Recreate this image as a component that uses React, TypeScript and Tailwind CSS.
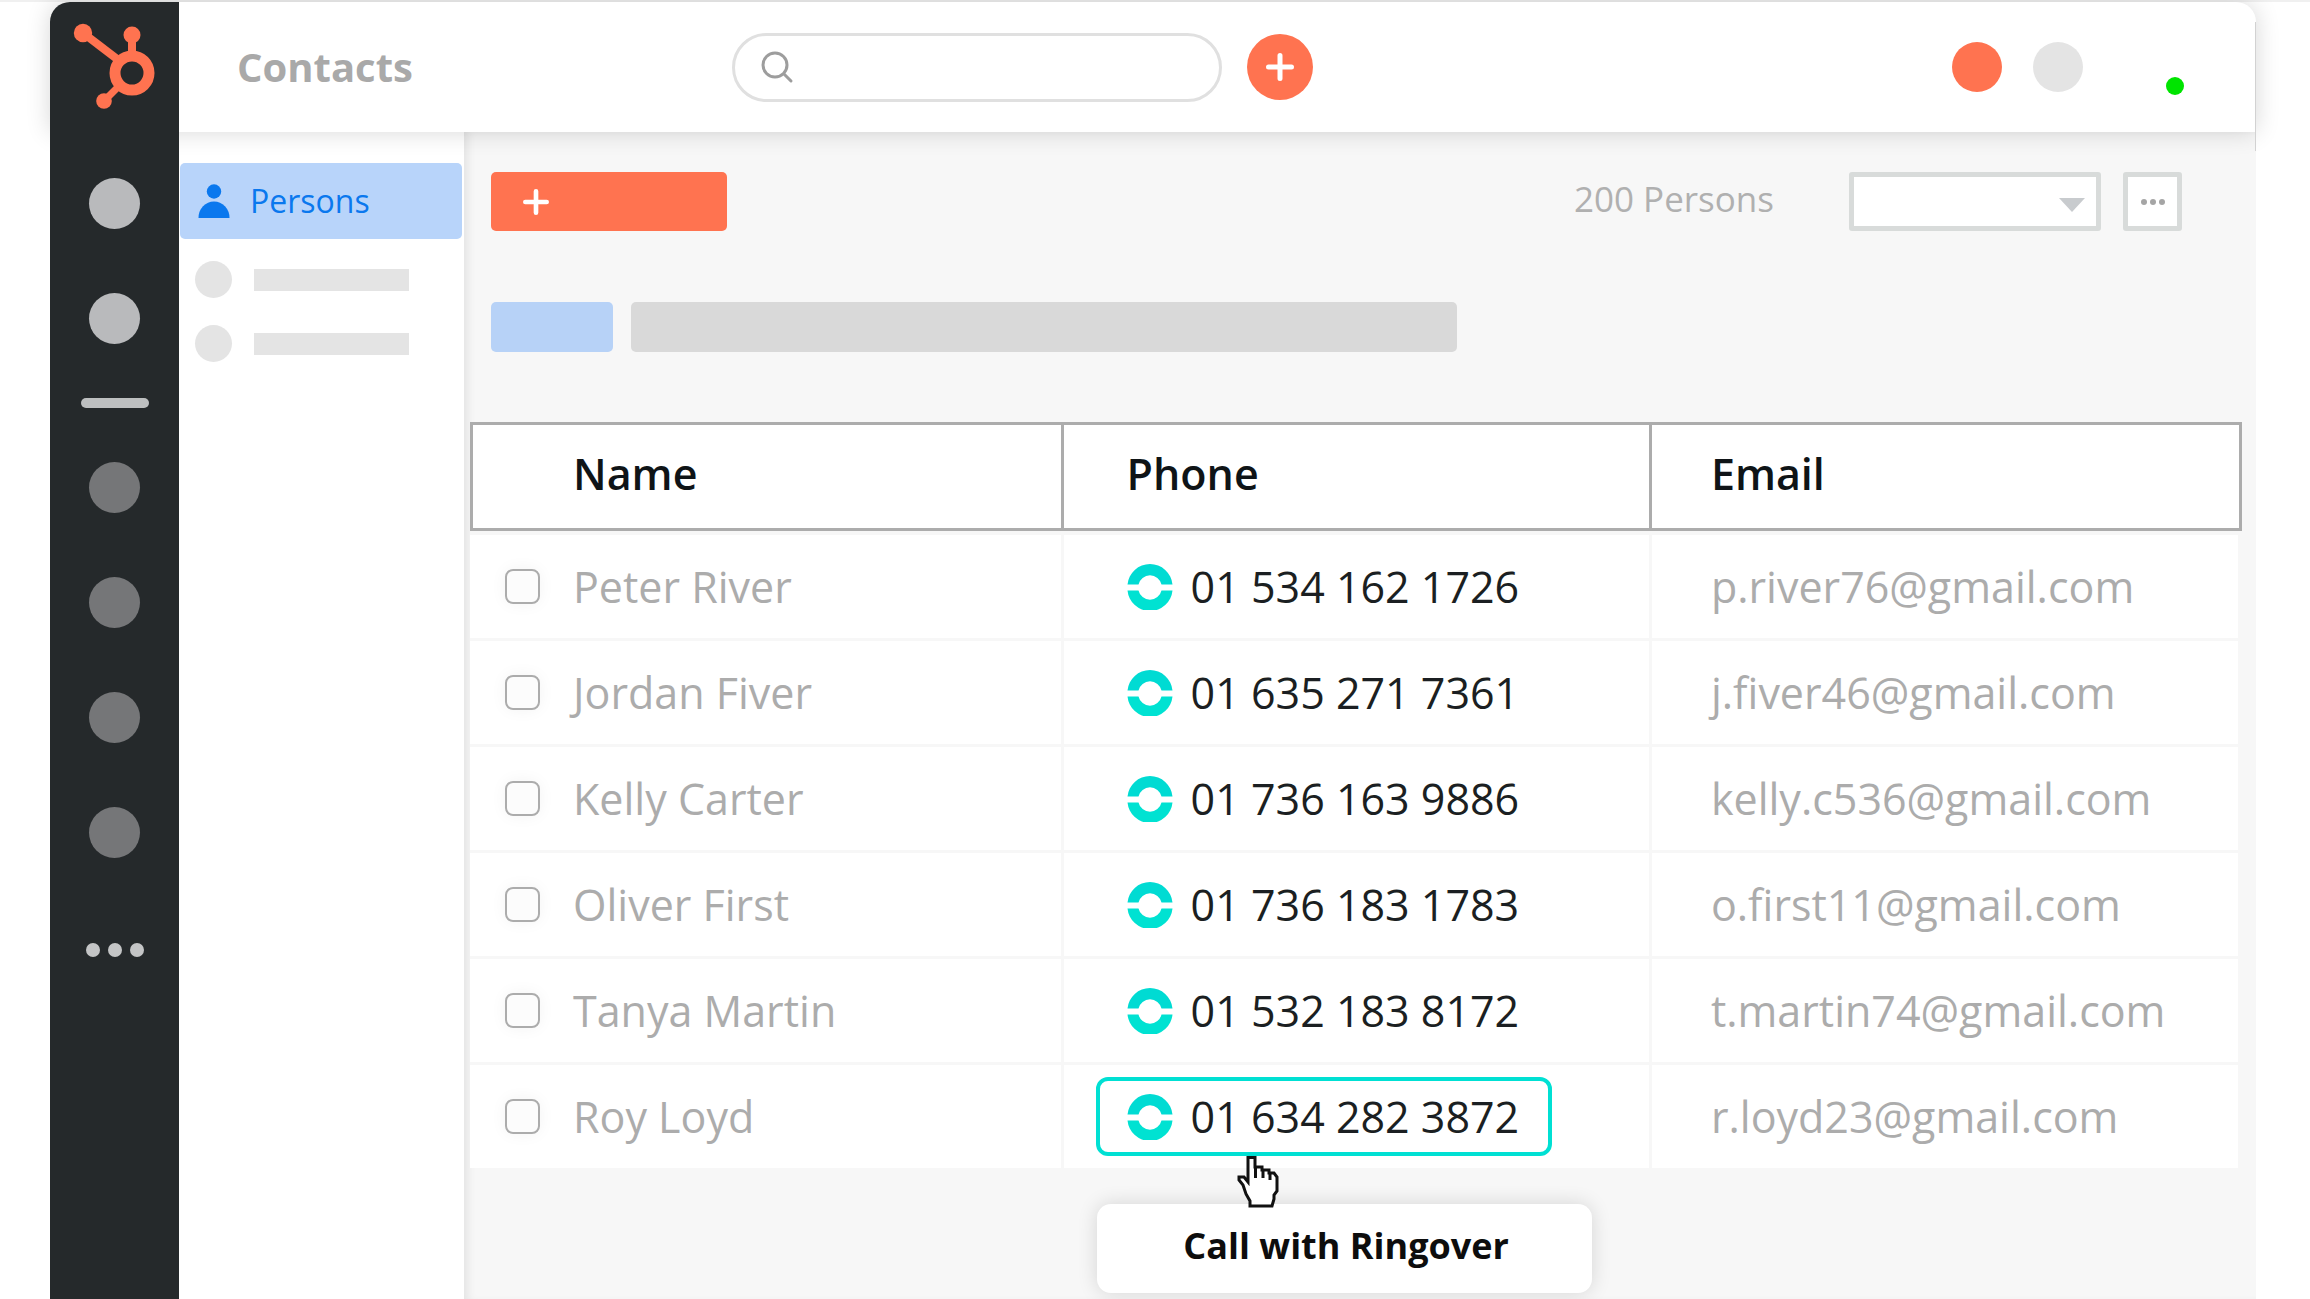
import React from "react";

type Contact = { name: string; phone: string; email: string };

const contacts: Contact[] = [
  { name: "Peter River", phone: "01 534 162 1726", email: "p.river76@gmail.com" },
  { name: "Jordan Fiver", phone: "01 635 271 7361", email: "j.fiver46@gmail.com" },
  { name: "Kelly Carter", phone: "01 736 163 9886", email: "kelly.c536@gmail.com" },
  { name: "Oliver First", phone: "01 736 183 1783", email: "o.first11@gmail.com" },
  { name: "Tanya Martin", phone: "01 532 183 8172", email: "t.martin74@gmail.com" },
  { name: "Roy Loyd", phone: "01 634 282 3872", email: "r.loyd23@gmail.com" },
];

function Logo() {
  return (
    <svg viewBox="0 0 84 86" className="h-[86px] w-[84px]" aria-hidden="true">
      <g stroke="#ff7350" fill="none">
        <path d="M10 10 L48 39" strokeWidth="8" />
        <path d="M59 12 V34" strokeWidth="8" />
        <path d="M31 78 L47 62" strokeWidth="7" />
        <circle cx="59" cy="50" r="17" strokeWidth="11" />
      </g>
      <g fill="#ff7350">
        <circle cx="10" cy="10" r="9.2" />
        <circle cx="59" cy="12" r="8.5" />
        <circle cx="31" cy="78" r="7.8" />
      </g>
    </svg>
  );
}

function Plus({ className }: { className: string }) {
  return (
    <svg viewBox="0 0 28 28" className={className} aria-hidden="true">
      <path d="M14 2.5 V25.5 M2.5 14 H25.5" stroke="#fff" strokeWidth="5" strokeLinecap="round" />
    </svg>
  );
}

function RingoverMark() {
  return (
    <svg viewBox="0 0 46 46" className="h-[46px] w-[46px] shrink-0" aria-hidden="true">
      <path d="M0.5 20.5 A22.6 22.6 0 0 1 45.5 20.5 H34.5 A11.8 11.8 0 0 0 11.5 20.5 Z" fill="#00dbd3" />
      <path d="M0.5 26.5 A22.6 22.6 0 0 0 45.5 26.5 H34.5 A11.8 11.8 0 0 1 11.5 26.5 Z" fill="#00e2d2" />
    </svg>
  );
}

function HandCursor() {
  return (
    <svg viewBox="0 0 42 52" className="h-[52px] w-[42px]" aria-hidden="true">
      <path
        d="M11 1.5 H18 V11 H25 V14 H32 V17 H37 L40 21 V35 L37 39 V43 L35 50 H13 V45 L9 38 L6 29 L2 24 V21 H7 L11 26 Z"
        fill="#fff"
        stroke="#111"
        strokeWidth="3"
      />
      <path d="M18.5 10 V22 M26 13 V22 M33 16 V24" stroke="#111" strokeWidth="3" />
    </svg>
  );
}

function Rail() {
  return (
    <nav aria-label="Main" className="z-20 flex w-[129px] shrink-0 flex-col items-center bg-[#25292b] pt-[46px]">
      <div className="flex flex-col gap-16">
        {["Home", "Inbox"].map((l) => (
          <button key={l} aria-label={l} className="block size-[51px] rounded-full bg-[#b9babc]" />
        ))}
      </div>
      <div className="mt-[54px] h-[10px] w-[68px] rounded-full bg-[#bdbfc0]" />
      <div className="mt-[54px] flex flex-col gap-16">
        {["Deals", "Tasks", "Reports", "Settings"].map((l) => (
          <button key={l} aria-label={l} className="block size-[51px] rounded-full bg-[#757678]" />
        ))}
      </div>
      <button aria-label="More" className="mt-[85px] flex gap-2">
        <span className="size-[14px] rounded-full bg-[#c4c5c6]" />
        <span className="size-[14px] rounded-full bg-[#c4c5c6]" />
        <span className="size-[14px] rounded-full bg-[#c4c5c6]" />
      </button>
    </nav>
  );
}

function Header() {
  return (
    <header className="relative z-10 flex h-[130px] items-center rounded-t-[20px] bg-white shadow-[0_0_24px_rgba(0,0,0,0.16)]">
      <a href="#" aria-label="Home page" className="flex h-full w-[129px] shrink-0 justify-center rounded-tl-[20px] bg-[#25292b] pt-[21px]">
        <Logo />
      </a>
      <h1 className="w-[553px] pl-[58px] text-[40px] leading-[52px] font-bold text-[#a9a9a9]">Contacts</h1>
      <label className="flex h-[69px] w-[490px] items-center rounded-full border-[3px] border-[#e0e0e0] pl-[25px]">
        <svg viewBox="0 0 34 34" className="size-[34px]" fill="none" stroke="#9d9d9d" strokeWidth="3" strokeLinecap="round" aria-hidden="true">
          <circle cx="15" cy="15" r="12" />
          <path d="M24 24 L31 31" />
        </svg>
        <input type="search" aria-label="Search" className="ml-3 w-[380px] bg-transparent text-[32px] outline-none" />
      </label>
      <button aria-label="Add" className="ml-[25px] flex size-[66px] items-center justify-center rounded-full bg-[#ff7350]">
        <Plus className="size-[28px]" />
      </button>
      <div className="ml-auto flex items-center pr-[72px]">
        <button aria-label="Notifications" className="size-[50px] rounded-full bg-[#ff7350]" />
        <button aria-label="Help" className="ml-[31px] size-[50px] rounded-full bg-[#e4e4e4]" />
        <span role="status" aria-label="Online" className="mt-[38px] ml-[83px] size-[18px] rounded-full bg-[#00e400]" />
      </div>
      <span className="absolute top-5 right-0 h-[129px] w-px bg-[#d2d2d2]" />
    </header>
  );
}

function Sidebar() {
  return (
    <aside className="w-[285px] shrink-0 bg-white pt-[31px] pr-[2px] pl-px">
      <a href="#" className="flex h-[76px] items-center rounded-[5px] bg-[#b8d4fa] pl-[18px] text-[32px] text-[#0a78ee]">
        <svg viewBox="0 0 32 34" className="h-[34px] w-[32px]" fill="#0a78ee" aria-hidden="true">
          <circle cx="16" cy="7.5" r="7.2" />
          <path d="M0.5 34 A15.5 16.5 0 0 1 31.5 34 Z" />
        </svg>
        <span className="ml-5">Persons</span>
      </a>
      <div className="mt-[22px] flex flex-col gap-[27px] pl-[15px]">
        {[0, 1].map((i) => (
          <div key={i} className="flex items-center gap-[22px]">
            <span className="size-[37px] rounded-full bg-[#e4e4e4]" />
            <span className="h-[22px] w-[155px] bg-[#e4e4e4]" />
          </div>
        ))}
      </div>
    </aside>
  );
}

function Toolbar() {
  return (
    <div className="flex items-center pr-[74px] pl-[27px] pt-[40px]">
      <button aria-label="Add person" className="flex h-[59px] w-[236px] items-center rounded-[5px] bg-[#ff7350] pl-8">
        <Plus className="size-[26px]" />
      </button>
      <p className="ml-auto pb-1.5 text-[35px] leading-[46px] text-[#b0b0b0]">200 Persons</p>
      <div className="relative ml-[75px]">
        <select aria-label="Filter" className="block h-[59px] w-[252px] appearance-none rounded-[3px] border-[5px] border-[#d8dbda] bg-white text-[32px]" />
        <svg viewBox="0 0 26 14" className="pointer-events-none absolute top-[26px] right-[16px] h-[14px] w-[26px]" aria-hidden="true">
          <path d="M0 0 H26 L13 14 Z" fill="#c8cbce" />
        </svg>
      </div>
      <button aria-label="More options" className="ml-[22px] flex size-[59px] items-center justify-center gap-[3px] rounded-[3px] border-[5px] border-[#d8dbda] bg-white">
        <span className="size-[6px] rounded-full bg-[#a5a5a5]" />
        <span className="size-[6px] rounded-full bg-[#a5a5a5]" />
        <span className="size-[6px] rounded-full bg-[#a5a5a5]" />
      </button>
    </div>
  );
}

function PhoneCell({ phone, active }: { phone: string; active: boolean }) {
  if (!active) {
    return (
      <button className="ml-[63px] flex items-center gap-[18px] text-[#1b1f22]">
        <RingoverMark />
        {phone}
      </button>
    );
  }
  return (
    <div className="relative ml-[32px] w-[456px]">
      <button
        aria-describedby="call-tip"
        className="flex h-[79px] w-full items-center gap-[18px] rounded-[12px] border-4 border-[#00e0d3] pl-[27px] text-[#1b1f22]"
      >
        <RingoverMark />
        {phone}
      </button>
      <div
        id="call-tip"
        role="tooltip"
        className="absolute top-[127px] left-px flex h-[89px] w-[495px] items-center justify-center rounded-[14px] bg-white pb-1.5 pl-1 text-[36px] font-bold text-[#0d0d0d] shadow-[0_0_20px_rgba(0,0,0,0.14)]"
      >
        Call with Ringover
      </div>
      <div className="absolute top-[79px] left-[141px]">
        <HandCursor />
      </div>
    </div>
  );
}

function ContactsTable() {
  return (
    <table className="w-full table-fixed border-separate border-spacing-0 text-left text-[43px] leading-[58px]">
      <colgroup>
        <col className="w-[33.5%]" />
        <col className="w-[33.2%]" />
        <col className="w-[33.3%]" />
      </colgroup>
      <thead>
        <tr className="h-[109px] text-[#0f1417]">
          <th scope="col" className="border-[3px] border-[#acacac] bg-white pb-1.5 pl-[100px] font-semibold">Name</th>
          <th scope="col" className="border-y-[3px] border-r-[3px] border-[#acacac] bg-white pb-1.5 pl-[63px] font-semibold">Phone</th>
          <th scope="col" className="border-y-[3px] border-r-[3px] border-[#acacac] bg-white pb-1.5 pl-[59px] font-semibold">Email</th>
        </tr>
      </thead>
      <tbody className="text-[#acacac]">
        {contacts.map((c, i) => {
          const first = i === 0;
          const last = i === contacts.length - 1;
          const edge = first
            ? "h-[110px] border-t-4 border-b-[3px] border-[#f7f7f7] bg-white p-0"
            : last
              ? "h-[103px] border-[#f7f7f7] bg-white p-0"
              : "h-[106px] border-b-[3px] border-[#f7f7f7] bg-white p-0";
          return (
            <tr key={c.name}>
              <td className={edge + " border-r-[3px]"}>
                <label className="flex items-center pl-[35px]">
                  <input
                    type="checkbox"
                    className="size-[35px] appearance-none rounded-[8px] border-2 border-[#acacac] bg-[#fcfcfc] shadow-[0_0_16px_rgba(0,0,0,0.05)]"
                  />
                  <span className="ml-[33px]">{c.name}</span>
                </label>
              </td>
              <td className={edge + " border-r-[3px]"}>
                <PhoneCell phone={c.phone} active={last} />
              </td>
              <td className={edge + " border-r-4"}>
                <span className="block pl-[59px]">{c.email}</span>
              </td>
            </tr>
          );
        })}
      </tbody>
    </table>
  );
}

export default function App() {
  return (
    <div className="flex min-h-screen flex-col border-t-2 border-[#f0f0f0] bg-white pr-[54px] pl-[50px] font-['Open_Sans',sans-serif]">
      <Header />
      <div className="flex grow">
        <Rail />
        <Sidebar />
        <main className="min-w-0 grow bg-[#f7f7f7] shadow-[inset_8px_0_8px_-4px_rgba(0,0,0,0.08)]">
          <Toolbar />
          <div className="mt-[71px] flex h-[50px] gap-[18px] pl-[27px]">
            <div className="w-[122px] rounded-[5px] bg-[#b7d2f7]" />
            <div className="w-[826px] rounded-[5px] bg-[#d9d9d9]" />
          </div>
          <div className="mt-[70px] pr-[14px] pl-[6px]">
            <ContactsTable />
          </div>
        </main>
      </div>
    </div>
  );
}
